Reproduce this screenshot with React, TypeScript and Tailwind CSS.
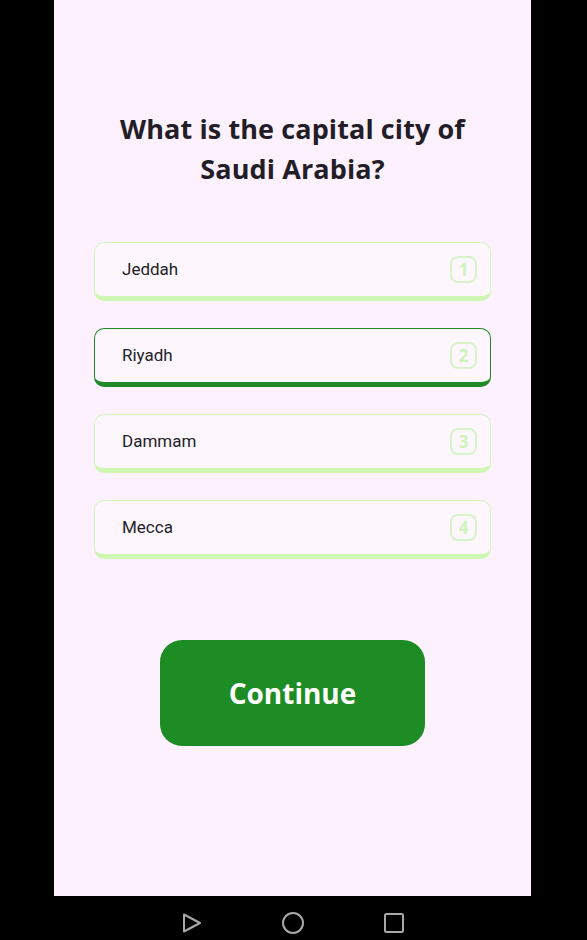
import React from "react";

const options = ["Jeddah", "Riyadh", "Dammam", "Mecca"];

const App = () => {
  const selected = 1;
  return (
    <div className="w-[587px] h-[940px] bg-black flex flex-col font-['Open_Sans',sans-serif]">
      <div className="ml-[54px] w-[477px] h-[896px] bg-[#fdf1fd] flex flex-col items-center pt-[109px]">
        <h1 className="text-center text-[27px] leading-[40px] font-bold text-[#221d26] tracking-[0.1px]">
          What is the capital city of
          <br />
          Saudi Arabia?
        </h1>
        <div className="w-[397px] mt-[53px] flex flex-col gap-[27px]">
          {options.map((o, i) => {
            const active = i === selected;
            return (
              <div
                key={o}
                className={
                  active
                    ? "h-[59px] rounded-[10px] border border-[#1f8a27] border-b-[5px] bg-[#fdf6fd] flex items-center justify-between pl-[27px] pr-[13px]"
                    : "h-[59px] rounded-[10px] border border-[#d2f5bc] border-b-[5px] border-b-[#cdf7b3] bg-[#fdf6fd] flex items-center justify-between pl-[27px] pr-[13px]"
                }
              >
                <span className="text-[17px] text-[#231e27] font-['Roboto',sans-serif]">{o}</span>
                <span className="w-[27px] h-[27px] rounded-[8px] border-2 border-[#d7f3c8] flex items-center justify-center text-[17px] leading-none font-bold text-[#cdf3b9]">
                  {i + 1}
                </span>
              </div>
            );
          })}
        </div>
        <button className="mt-[81px] w-[265px] h-[106px] rounded-[22px] bg-[#1d8c24] text-white text-[28px] font-bold">
          Continue
        </button>
      </div>
      <div className="w-full h-[44px] flex items-start justify-center gap-[80px] pt-[17px] pr-[2px]">
        <svg width="20" height="20" viewBox="0 0 20 20" fill="none" stroke="#a8a8a8" strokeWidth="2">
          <path d="M2 1.5 L18 10 L2 18.5 Z" strokeLinejoin="round" />
        </svg>
        <svg width="22" height="22" viewBox="0 0 22 22" fill="none" stroke="#a8a8a8" strokeWidth="2" className="-mt-[1px]">
          <circle cx="11" cy="11" r="10" />
        </svg>
        <svg width="20" height="20" viewBox="0 0 20 20" fill="none" stroke="#a8a8a8" strokeWidth="2">
          <rect x="1" y="1" width="18" height="18" rx="1.5" />
        </svg>
      </div>
    </div>
  );
};

export default App;
